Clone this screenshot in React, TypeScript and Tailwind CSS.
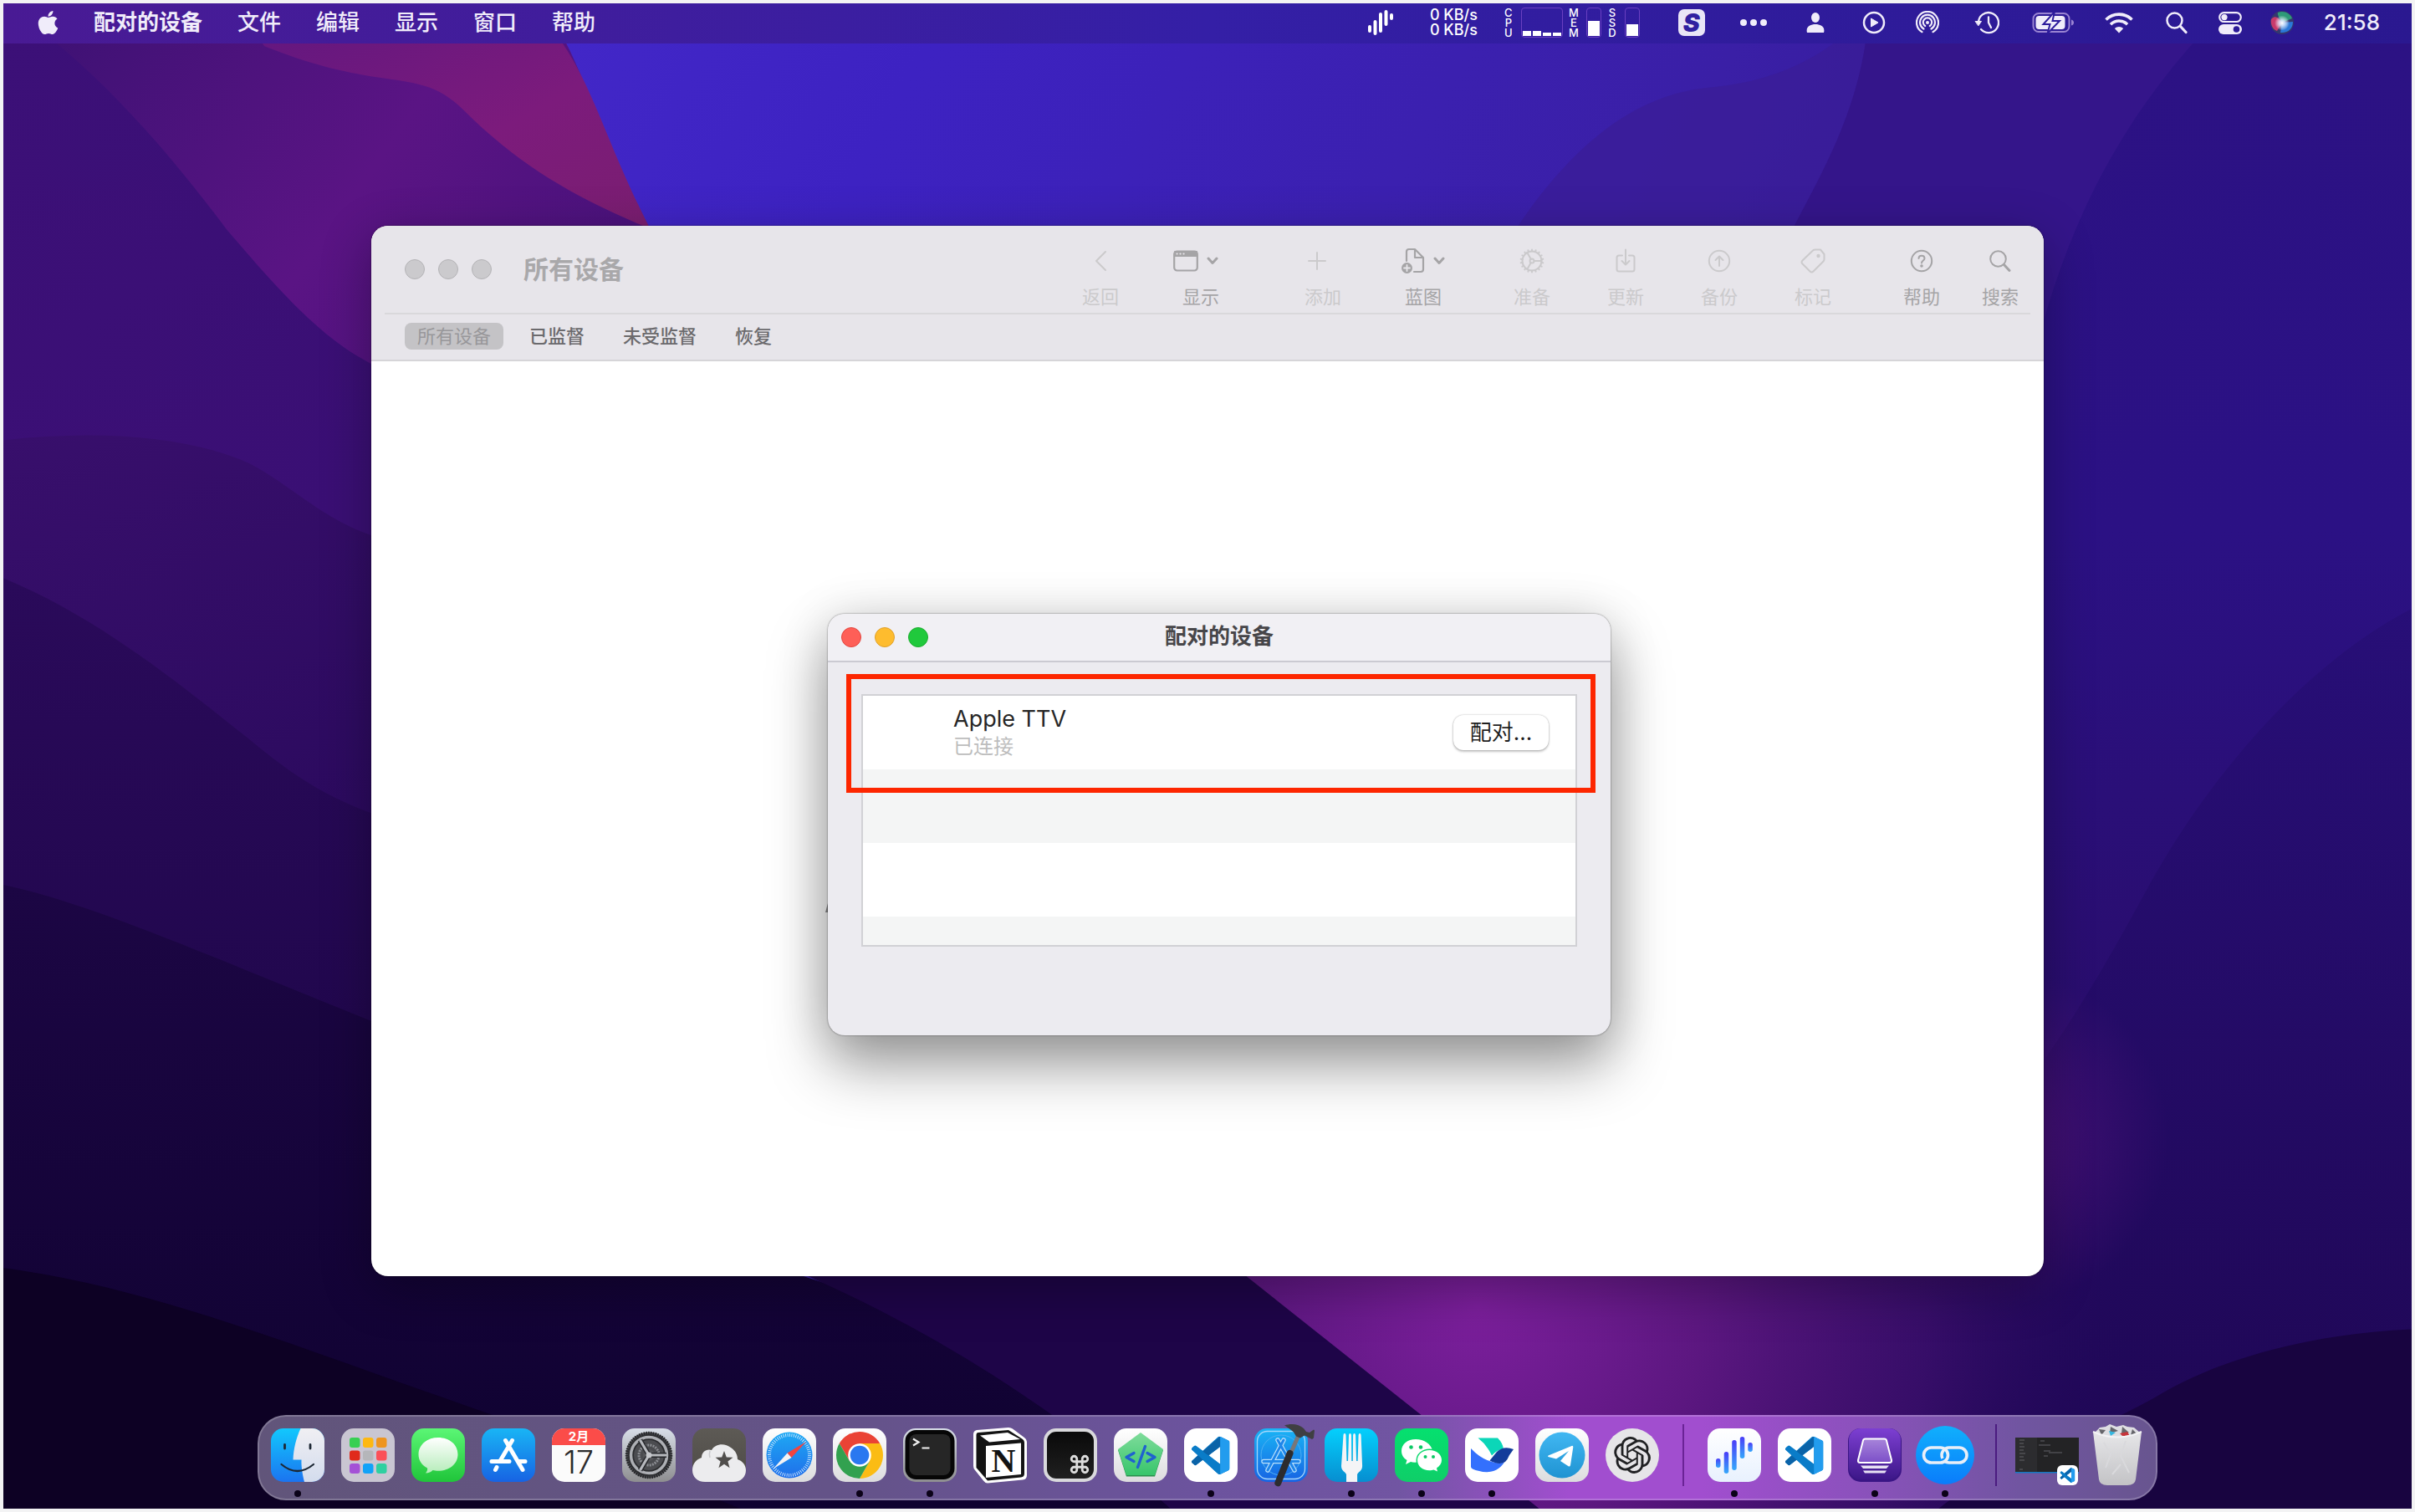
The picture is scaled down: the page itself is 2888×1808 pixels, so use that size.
import React from "react";
import { Command } from "lucide-react";
import { FaApple } from "react-icons/fa";
import { SiOpenai } from "react-icons/si";

type Kids = { children?: React.ReactNode };

/* ---------- Wallpaper ---------- */

function Wallpaper() {
  return (
    <svg className="absolute inset-0 -z-10 h-full w-full" viewBox="0 0 1568 982" preserveAspectRatio="none" aria-hidden="true">
      <defs>
        <linearGradient id="w-sky" x1="0" y1="0" x2="1" y2="0.35">
          <stop offset="0" stopColor="#4a2fd0" />
          <stop offset="0.35" stopColor="#3d22c2" />
          <stop offset="0.65" stopColor="#3a1fa6" />
          <stop offset="1" stopColor="#2a1488" />
        </linearGradient>
        <linearGradient id="w-violet" x1="0" y1="0" x2="1" y2="0.5">
          <stop offset="0" stopColor="#3a1172" />
          <stop offset="0.6" stopColor="#5a1484" />
          <stop offset="1" stopColor="#4a127c" />
        </linearGradient>
        <linearGradient id="w-magenta" x1="0" y1="0" x2="1" y2="1">
          <stop offset="0" stopColor="#5e1680" />
          <stop offset="0.6" stopColor="#7c1b7c" />
          <stop offset="1" stopColor="#7a1e70" />
        </linearGradient>
        <linearGradient id="w-left1" x1="0" y1="0" x2="0.4" y2="1">
          <stop offset="0" stopColor="#3c1078" />
          <stop offset="1" stopColor="#3a0f74" />
        </linearGradient>
        <linearGradient id="w-left2" x1="0" y1="0" x2="0.3" y2="1">
          <stop offset="0" stopColor="#380f6c" />
          <stop offset="1" stopColor="#2b0a5e" />
        </linearGradient>
        <linearGradient id="w-left3" x1="0" y1="0" x2="0" y2="1">
          <stop offset="0" stopColor="#2a0a5a" />
          <stop offset="1" stopColor="#1d0648" />
        </linearGradient>
        <linearGradient id="w-left4" x1="0" y1="0" x2="0" y2="1">
          <stop offset="0" stopColor="#1c0644" />
          <stop offset="1" stopColor="#0f0230" />
        </linearGradient>
        <linearGradient id="w-right" x1="0" y1="0" x2="0" y2="1">
          <stop offset="0" stopColor="#2c1284" />
          <stop offset="0.35" stopColor="#2b1184" />
          <stop offset="0.7" stopColor="#290d6c" />
          <stop offset="1" stopColor="#23085a" />
        </linearGradient>
        <linearGradient id="w-right2" x1="0" y1="0" x2="0" y2="1">
          <stop offset="0" stopColor="#260e74" />
          <stop offset="1" stopColor="#1c0650" />
        </linearGradient>
        <radialGradient id="w-glow" cx="960" cy="850" r="420" gradientUnits="userSpaceOnUse">
          <stop offset="0" stopColor="#7c1f9c" />
          <stop offset="0.35" stopColor="#5c1780" />
          <stop offset="0.7" stopColor="#3c0f6c" stopOpacity=".8" />
          <stop offset="1" stopColor="#23085a" stopOpacity="0" />
        </radialGradient>
        <radialGradient id="w-glow2" cx="1300" cy="740" r="110" gradientUnits="userSpaceOnUse">
          <stop offset="0" stopColor="#5a1480" stopOpacity=".7" />
          <stop offset="1" stopColor="#5a1480" stopOpacity="0" />
        </radialGradient>
      </defs>
      <rect width="1568" height="982" fill="url(#w-sky)" />
      <path d="M1110 55C1060 60 1020 95 985 147V300H1240V0H1215C1205 20 1170 50 1110 55Z" fill="#3b1c96" opacity=".7" />
      <path d="M1215 0C1212 60 1190 100 1165 147V400H1568V0Z" fill="#34158a" />
      <path d="M1450 0C1390 60 1345 130 1320 240L700 600V982H1568V0Z" fill="url(#w-right)" />
      <path d="M1568 395C1500 430 1440 500 1400 570C1370 625 1340 680 1290 740L760 800V982H1568Z" fill="url(#w-right2)" opacity=".7" />
      <path d="M0 0H350C375 30 385 80 421 147L300 300H0Z" fill="url(#w-violet)" />
      <path d="M170 28C250 60 270 40 300 70C340 110 380 130 421 147C390 85 385 55 360 20L150 0Z" fill="url(#w-magenta)" />
      <path d="M0 0C60 40 110 100 145 147C190 200 215 225 250 240V420H0Z" fill="url(#w-left1)" />
      <path d="M0 285C60 278 120 282 160 300C190 315 215 345 260 352V600H0Z" fill="url(#w-left2)" />
      <path d="M0 375C60 400 110 440 160 480C190 505 215 522 260 535V800H0Z" fill="url(#w-left3)" />
      <path d="M0 575C60 588 130 620 260 672L520 830C620 860 700 920 760 982H0Z" fill="url(#w-left4)" />
      <path d="M500 820C620 870 700 930 760 982H1100L810 820Z" fill="#1e0548" />
      <path d="M0 825C100 838 200 880 330 925C400 950 450 970 480 982H0Z" fill="#0d0124" />
      <path d="M790 815L1000 982H1568V600H1200L900 815Z" fill="url(#w-glow)" />
      <circle cx="1300" cy="740" r="110" fill="url(#w-glow2)" />
      <path d="M1568 865C1500 868 1440 885 1400 910C1350 938 1300 950 1260 982H1568Z" fill="#180440" />
    </svg>
  );
}

/* ---------- Menu bar ---------- */

const MENUS = ["文件", "编辑", "显示", "窗口", "帮助"];

function Meter({ label, levels, wide }: { label: string; levels: number[]; wide?: boolean }) {
  return (
    <div className="flex items-center gap-[10px]">
      <div className="flex w-[10px] flex-col items-center text-[13px] leading-3 font-medium">
        {label.split("").map((c, i) => (
          <span key={i}>{c}</span>
        ))}
      </div>
      <div className={`${wide ? "w-[50px]" : "w-[18px]"} flex h-9 items-end gap-[2px] rounded-[4px] border border-[#6a3fc0] px-px pb-px`}>
        {levels.map((h, i) => (
          <div key={i} className="flex-1 bg-white" style={{ height: h }} />
        ))}
      </div>
    </div>
  );
}

function StatusButton({ label, width, children }: Kids & { label: string; width: string }) {
  return (
    <button type="button" aria-label={label} className={`${width} flex h-full items-center justify-center`}>
      {children}
    </button>
  );
}

function MenuBar() {
  return (
    <header className="flex h-12 items-center justify-between bg-linear-to-r from-[#491a94] via-[#341fa6] to-[#2a1890] pb-[2px] text-[26px] leading-[46px] text-[#f0ecfa]">
      <nav className="flex items-center gap-[42px] pl-10 font-medium" aria-label="菜单">
        <button type="button" aria-label="Apple" className="-mr-[2px] w-7">
          <FaApple className="h-8 w-[27px]" />
        </button>
        <button type="button" className="font-bold">配对的设备</button>
        {MENUS.map((m) => (
          <button key={m} type="button">{m}</button>
        ))}
      </nav>
      <div className="flex h-full items-center pr-[38px]">
        <StatusButton label="音频" width="w-[30px]">
          <svg width="30" height="32" viewBox="0 0 30 32" stroke="#fff" strokeWidth="4" strokeLinecap="round">
            <path d="M2 21v5M8.500 15v14M15 6v20M21.500 3v15M28 7v4" />
          </svg>
        </StatusButton>
        <div className="ml-11 flex flex-col text-[18px] leading-[18px] font-medium text-white">
          <span>0 KB/s</span>
          <span>0 KB/s</span>
        </div>
        <div className="ml-8 flex items-center gap-2 pr-6 text-white">
          <Meter label="CPU" levels={[6, 6, 4, 4]} wide />
          <Meter label="MEM" levels={[18]} />
          <Meter label="SSD" levels={[14]} />
        </div>
        <StatusButton label="输入法" width="w-[76px]">
          <span className="flex size-8 items-center justify-center rounded-[7px] bg-[#e9e5f6] text-[30px] leading-8 font-black text-[#3020a0] italic">S</span>
        </StatusButton>
        <StatusButton label="更多" width="w-[72px]">
          <svg width="32" height="8" viewBox="0 0 32 8" fill="currentColor"><circle cx="4" cy="4" r="4" /><circle cx="16" cy="4" r="4" /><circle cx="28" cy="4" r="4" /></svg>
        </StatusButton>
        <StatusButton label="用户" width="w-[76px]">
          <svg width="22" height="24" viewBox="0 0 22 24" fill="currentColor"><ellipse cx="11" cy="6" rx="5" ry="6" /><path d="M1 24C-1 17 5 14 11 14s12 3 10 10Z" /></svg>
        </StatusButton>
        <StatusButton label="播放" width="w-16">
          <svg width="28" height="28" viewBox="0 0 28 28"><circle cx="14" cy="14" r="12" fill="none" stroke="currentColor" strokeWidth="2.500" /><path d="M10.500 9v10l8.500-5Z" fill="currentColor" stroke="currentColor" strokeLinejoin="round" /></svg>
        </StatusButton>
        <StatusButton label="隔空投送" width="w-16">
          <svg width="28" height="28" viewBox="0 0 28 28" fill="none" stroke="currentColor" strokeWidth="2.200" strokeLinecap="round">
            <path d="M7.500 25.200a13 13 0 1 1 13 0M9.500 21.500a9 9 0 1 1 9 0M11.200 18a5.200 5.200 0 1 1 5.600 0" />
            <circle cx="14" cy="14" r="2" fill="currentColor" stroke="none" />
          </svg>
        </StatusButton>
        <StatusButton label="时间机器" width="w-[78px]">
          <svg width="30" height="28" viewBox="0 0 30 28" fill="none" stroke="currentColor" strokeWidth="2.300" strokeLinecap="round" strokeLinejoin="round">
            <path d="M5 14a12 12 0 1 1 3 8M17 7.500V14l3 6" />
            <path d="M1.500 12.500h7L5 17.500Z" fill="currentColor" strokeWidth="1" />
          </svg>
        </StatusButton>
        <StatusButton label="电池" width="w-[82px]">
          <svg width="52" height="26" viewBox="0 0 52 26">
            <rect x="1.500" y="2" width="43" height="22" rx="6.500" fill="none" stroke="#9a84d2" strokeWidth="2" />
            <path d="M47 9.500c4 1 4 6 0 7Z" fill="#9a84d2" />
            <rect x="4.500" y="5" width="35" height="16" rx="4" fill="currentColor" />
            <path d="M27 0 13.500 15h8L18.500 26 33 11h-8.500Z" fill="currentColor" stroke="#2e1c9c" strokeWidth="2" />
          </svg>
        </StatusButton>
        <StatusButton label="无线局域网" width="w-[74px]">
          <svg width="34" height="26" viewBox="0 0 34 26" fill="none" stroke="currentColor" strokeWidth="3.600">
            <path d="M1.500 9.500a22 22 0 0 1 31 0M7 15.200a14 14 0 0 1 20 0" />
            <path d="M17 25.500 11.800 20a7.500 7.500 0 0 1 10.400 0Z" fill="currentColor" stroke="none" />
          </svg>
        </StatusButton>
        <StatusButton label="搜索" width="w-16">
          <svg width="26" height="28" viewBox="0 0 26 28" fill="none" stroke="currentColor" strokeLinecap="round"><circle cx="10.500" cy="11.500" r="9" strokeWidth="2.500" /><path d="m17.500 18.500 6.500 7" strokeWidth="3.200" /></svg>
        </StatusButton>
        <StatusButton label="控制中心" width="w-16">
          <svg width="28" height="28" viewBox="0 0 28 28">
            <rect x="1.200" y="2.200" width="25.600" height="10.800" rx="5.400" fill="none" stroke="currentColor" strokeWidth="2.200" />
            <circle cx="7" cy="7.600" r="3.600" fill="currentColor" />
            <rect y="16" width="28" height="12" rx="6" fill="currentColor" />
            <circle cx="21.500" cy="22" r="3.800" fill="#2c1a98" />
          </svg>
        </StatusButton>
        <StatusButton label="Siri" width="w-[60px]">
          <svg width="28" height="28" viewBox="0 0 28 28">
            <defs>
              <radialGradient id="siri-core"><stop offset="0" stopColor="#fff" /><stop offset=".35" stopColor="#d8e8ff" stopOpacity=".9" /><stop offset="1" stopColor="#fff" stopOpacity="0" /></radialGradient>
            </defs>
            <circle cx="14" cy="14" r="14" fill="#34386e" />
            <path d="M1 10C6 4 10 9 14 14L8 24C2 22 0 15 1 10Z" fill="#c83a6c" />
            <path d="M9 2c7-3 15 1 17 7l-12 5C12 9 8 6 9 2Z" fill="#2e9a78" />
            <path d="M14 14l13-1c0 8-6 14-15 13Z" fill="#2b78d8" />
            <circle cx="14" cy="14.500" r="9" fill="url(#siri-core)" />
          </svg>
        </StatusButton>
        <time className="pl-5 font-medium">21:58</time>
      </div>
    </header>
  );
}

/* ---------- Device window ---------- */

function Tool({ label, faint, children }: Kids & { label: string; faint?: boolean }) {
  return (
    <button type="button" disabled={faint} className={`${faint ? "text-[#cbcacc]" : "text-[#a5a4a6]"} flex w-[72px] flex-col items-center gap-3`}>
      <span className="flex h-8 items-center justify-center gap-[10px]">{children}</span>
      <span className="text-[22px] leading-[30px]">{label}</span>
    </button>
  );
}

const thin = { fill: "none", stroke: "currentColor", strokeWidth: 2, strokeLinecap: "round", strokeLinejoin: "round" } as const;

function Chevron() {
  return <svg width="14" height="10" viewBox="0 0 14 10" {...thin} strokeWidth={3}><path d="m2 2 5 5.500L12 2" /></svg>;
}

function GearIcon() {
  const teeth = Array.from({ length: 18 }, (_, i) => i * 20);
  return (
    <svg width="30" height="30" viewBox="0 0 30 30" {...thin}>
      <circle cx="15" cy="15" r="11.500" />
      <circle cx="15" cy="15" r="2.500" />
      <path d="M17.500 15h9M13.700 12.800 9.300 5M13.700 17.200 9.300 25" />
      {teeth.map((a) => (
        <path key={a} d="M15 3.500V1.500" transform={`rotate(${a} 15 15)`} />
      ))}
    </svg>
  );
}

const TABS = ["所有设备", "已监督", "未受监督", "恢复"];

function DeviceWindow() {
  return (
    <section aria-label="所有设备" className="relative mx-auto mt-[218px] flex h-[1256px] w-[2000px] flex-col rounded-[20px] bg-white shadow-[0_0_2px_rgba(0,0,0,0.6),0_16px_60px_rgba(0,0,0,0.3)]">
      <div className="rounded-t-[20px] border-b-2 border-[#d6d5d8] bg-[#e7e5ea]">
        <div className="mx-4 flex h-[106px] items-start justify-between border-b-2 border-[#d9d8db]">
          <div className="flex h-[104px] items-center gap-4 pl-6">
            {[0, 1, 2].map((i) => (
              <span key={i} className="size-6 rounded-full border border-[#b4b3b6] bg-[#cbcacd]" />
            ))}
            <h1 className="pl-[22px] text-[30px] font-bold text-[#a9a8aa]">所有设备</h1>
          </div>
          <div className="flex gap-[58px] pt-[26px]">
            <div className="mr-4 flex gap-12">
              <Tool label="返回" faint>
                <svg width="14" height="26" viewBox="0 0 14 26" {...thin}><path d="M13 2 2 13l11 11" /></svg>
              </Tool>
              <Tool label="显示">
                <span className="flex items-center gap-[10px] pr-3">
                  <svg width="30" height="26" viewBox="0 0 30 26" {...thin} strokeWidth={2.2}>
                    <rect x="1.200" y="1.500" width="27.600" height="23" rx="3.500" />
                    <path d="M2 2h26v5H2Z" fill="currentColor" />
                    <path d="M4.500 4.500h.1M8.500 4.500h.1M12.500 4.500h.1" stroke="#e7e5ea" />
                  </svg>
                  <Chevron />
                </span>
              </Tool>
            </div>
            <div className="flex gap-12">
              <Tool label="添加" faint>
                <svg width="36" height="24" viewBox="0 0 36 24" {...thin}><path d="M1 12h20M11 2v20" /></svg>
              </Tool>
              <Tool label="蓝图">
                <svg width="28" height="32" viewBox="0 0 28 32" {...thin} strokeWidth={2.2}>
                  <path d="M6 16V5q0-3 3-3h7l10 10v14q0 3-3 3h-8M16 2v10h10" />
                  <circle cx="6.500" cy="24.500" r="6.500" fill="currentColor" stroke="none" />
                  <path d="M6.500 21v7M3 24.500h7" stroke="#e7e5ea" strokeWidth="1.800" />
                </svg>
                <Chevron />
              </Tool>
            </div>
            <div className="flex gap-10">
              <Tool label="准备" faint><GearIcon /></Tool>
              <Tool label="更新" faint>
                <svg width="24" height="30" viewBox="0 0 24 30" {...thin}><path d="M8 8.500H4q-2.500 0-2.500 2.500v14q0 2.500 2.500 2.500h16q2.500 0 2.500-2.500V11q0-2.500-2.500-2.500h-4M12 1.500v18m-4.500-4.500 4.500 4.500 4.500-4.500" /></svg>
              </Tool>
              <Tool label="备份" faint>
                <svg width="28" height="28" viewBox="0 0 28 28" {...thin}><circle cx="14" cy="14" r="12.200" /><path d="M14 20V8.500m-4.500 4.500L14 8.500l4.500 4.500" /></svg>
              </Tool>
              <Tool label="标记" faint>
                <svg width="30" height="30" viewBox="0 0 30 30" {...thin}><path d="M15 2.500Q16 1.500 18 1.500h6L28.500 7v6q0 1.500-1 2.500L15.500 27.500q-2 2-4 0l-9-9q-2-2 0-4Z" /><circle cx="21.500" cy="9" r="1.200" fill="currentColor" /></svg>
              </Tool>
            </div>
            <div className="flex gap-[22px]">
              <Tool label="帮助">
                <svg width="28" height="28" viewBox="0 0 28 28" {...thin}><circle cx="14" cy="14" r="12.200" /><path d="M10.500 11c0-4.500 7-4.500 7 0 0 2.500-3.500 2.500-3.500 5.500" /><circle cx="14" cy="20" r=".8" fill="currentColor" /></svg>
              </Tool>
              <Tool label="搜索">
                <svg width="26" height="28" viewBox="0 0 26 28" {...thin}><circle cx="10.500" cy="11.500" r="9.300" /><path d="m17.500 18.500 6.500 7" strokeWidth="3" /></svg>
              </Tool>
            </div>
          </div>
        </div>
        <nav className="flex h-[54px] items-center gap-4 px-10 pb-[2px]" aria-label="筛选">
          {TABS.map((t, i) => (
            <button
              key={t}
              type="button"
              aria-pressed={i === 0}
              className={`${i === 0 ? "bg-[#c4c3c6] text-[#98979a]" : "font-medium text-[#6b6a6d]"} h-8 rounded-lg px-[15px] text-[22px] leading-[30px]`}
            >
              {t}
            </button>
          ))}
        </nav>
      </div>
      <svg className="absolute top-[810px] left-[543px]" width="4" height="11" viewBox="0 0 4 11" aria-hidden="true"><path d="M3 0h1v11H0Z" fill="#8a8a8c" /></svg>
      <PairDialog />
    </section>
  );
}

function PairDialog() {
  return (
    <section
      role="dialog"
      aria-label="配对的设备"
      className="absolute top-[464px] left-[546px] h-[504px] w-[936px] rounded-[20px] bg-[#ecebf0] shadow-[0_0_2px_rgba(0,0,0,0.6),0_36px_70px_rgba(0,0,0,0.38),0_4px_60px_rgba(0,0,0,0.14)]"
    >
      <div className="grid h-[58px] grid-cols-[1fr_auto_1fr] items-center rounded-t-[20px] border-b-2 border-[#cbcad2] bg-[#f1f0f4] px-4">
        <div className="flex gap-4">
          <button type="button" aria-label="关闭" className="size-6 rounded-full border border-[#e2463f] bg-[#fe5f57]" />
          <button type="button" aria-label="最小化" className="size-6 rounded-full border border-[#e0a02a] bg-[#febc2e]" />
          <button type="button" aria-label="缩放" className="size-6 rounded-full border border-[#1dad2f] bg-[#20c93c]" />
        </div>
        <h2 className="pb-1 text-[26px] font-bold text-[#474649]">配对的设备</h2>
      </div>
      <ul className="mx-10 mt-[38px] border-2 border-[#d1d1d5] bg-white">
        <li className="flex h-[88px] items-center justify-between pr-8 pl-[108px]">
          <div className="flex flex-col pt-[2px]">
            <span className="text-[27px] leading-8 text-[#262626]">Apple TTV</span>
            <span className="text-[24px] leading-[34px] text-[#bdbdbd]">已连接</span>
          </div>
          <button type="button" className="h-[42px] w-[114px] rounded-xl bg-white text-[26px] leading-[42px] text-[#1f1f1f] shadow-[0_0_2px_rgba(0,0,0,0.3),0_2px_3px_rgba(0,0,0,0.22)]">
            配对...
          </button>
        </li>
        <li className="h-[88px] bg-[#f4f5f5]" />
        <li className="h-[88px]" />
        <li className="h-[34px] bg-[#f4f5f5]" />
      </ul>
      <div className="pointer-events-none absolute top-[72px] left-[22px] h-[142px] w-[896px] border-6 border-[#fd2600]" />
    </section>
  );
}

/* ---------- Dock icons ---------- */

function Art({ children }: Kids) {
  return <svg className="size-16 overflow-visible" viewBox="0 0 64 64" aria-hidden="true">{children}</svg>;
}

function Tile({ fill }: { fill: string }) {
  return <rect width="64" height="64" rx="15" fill={fill} />;
}

function DockDefs() {
  const g = (id: string, a: string, b: string) => (
    <linearGradient id={id} x1="0" y1="0" x2="0" y2="1"><stop offset="0" stopColor={a} /><stop offset="1" stopColor={b} /></linearGradient>
  );
  return (
    <svg className="absolute size-0" aria-hidden="true">
      <defs>
        {g("d-finder", "#12c8fd", "#1b74f0")}
        {g("d-face", "#f0eff3", "#d3dced")}
        {g("d-green", "#5bf675", "#20c53a")}
        {g("d-bubble", "#ffffff", "#b5ecb9")}
        {g("d-store", "#19b5f5", "#1763e3")}
        {g("d-silver", "#d8dee8", "#8e8e90")}
        {g("d-stone", "#5d5a55", "#4d4a46")}
        {g("d-white", "#ffffff", "#dcdcde")}
        {g("d-safari", "#1ea9f4", "#1f6eea")}
        {g("d-penta", "#7fdc9b", "#37c56b")}
        {g("d-fork", "#04d0fd", "#078ed0")}
        {g("d-wechat", "#05e06f", "#0fce68")}
        {g("d-tg", "#41b7f2", "#1f93d2")}
        {g("d-wave", "#ffffff", "#e8f1fe")}
        {g("d-bars", "#4a3cf8", "#35a8fb")}
        {g("d-conf", "#7d3fd2", "#3d1789")}
        {g("d-confin", "#a784da", "#7c4fc8")}
        {g("d-link", "#10b0fd", "#0a7cfb")}
        {g("d-trash", "#e6e6e8", "#c3c3c6")}
        <clipPath id="d-tile"><rect width="64" height="64" rx="15" /></clipPath>
        <clipPath id="d-vs">
          <path d="M23.150 2.587L18.210.21a1.494 1.494 0 0 0-1.705.29l-9.460 8.630-4.120-3.128a.999.999 0 0 0-1.276.057L.327 7.261A1 1 0 0 0 .326 8.740L3.899 12 .326 15.260a1 1 0 0 0 .001 1.479L1.650 17.940a.999.999 0 0 0 1.276.057l4.120-3.128 9.460 8.630a1.492 1.492 0 0 0 1.704.290l4.942-2.377A1.500 1.500 0 0 0 24 20.060V3.939a1.500 1.500 0 0 0-.850-1.352zm-5.146 14.861L10.826 12l7.178-5.448v10.896z" clipRule="evenodd" />
        </clipPath>
      </defs>
    </svg>
  );
}

function Finder() {
  return (
    <Art>
      <g clipPath="url(#d-tile)">
        <rect width="64" height="64" fill="url(#d-finder)" />
        <path d="M35.500 0C30 12 27 25 26.500 37.500H36.500C36 46 38 56 40 64H64V0Z" fill="url(#d-face)" />
      </g>
      <path d="M16.500 19.500v4.500M47 19.500v4.500" stroke="#1d2733" strokeWidth="2.800" strokeLinecap="round" />
      <path d="M12.500 43q19 16 38.500 0" fill="none" stroke="#1d2733" strokeWidth="2.200" strokeLinecap="round" />
    </Art>
  );
}

const PAD = ["#37cf52", "#fdb813", "#ee9520", "#e02a1c", "#b5b6ba", "#fb4f58", "#a451d6", "#11a2f8", "#2fd0a0"];

function Launchpad() {
  return (
    <Art>
      <Tile fill="#c9c6d2" />
      {PAD.map((c, i) => (
        <rect key={c} x={10 + (i % 3) * 16} y={11 + Math.floor(i / 3) * 15.5} width="12.500" height="12" rx="3" fill={c} />
      ))}
    </Art>
  );
}

function Messages() {
  return (
    <Art>
      <Tile fill="url(#d-green)" />
      <path d="M32 11C18.500 11 8.500 19.500 8.500 31c0 7.500 4 13 10.500 16.500.5 2.500-.5 4-2 6 4 0 6.500-1.500 8.500-3.500 2 .5 4 .8 6.500.8C45.500 50.800 55.500 42.500 55.500 31S45.500 11 32 11Z" fill="url(#d-bubble)" />
    </Art>
  );
}

function AppStore() {
  return (
    <Art>
      <Tile fill="url(#d-store)" />
      <path d="M36.500 14.500 22 39M18 46.500 16.500 49.500M28.500 14.500l20.500 35M12 39.500h21M45 39.500h7" stroke="#fff" strokeWidth="5" strokeLinecap="round" />
    </Art>
  );
}

function CalendarIcon() {
  return (
    <span className="flex size-16 flex-col items-center overflow-hidden rounded-[15px] bg-[#fbfbfb]">
      <span className="w-full bg-[#fb4c49] text-center text-[15px] leading-5 font-bold text-white">2月</span>
      <span className="text-[38px] leading-[40px] font-light text-[#2b2b2b]">17</span>
    </span>
  );
}

function Settings() {
  return (
    <Art>
      <Tile fill="url(#d-silver)" />
      <circle cx="32" cy="32" r="27.500" fill="#4b4c50" />
      <circle cx="32" cy="32" r="26.500" fill="none" stroke="#26272a" strokeWidth="3.500" strokeDasharray="1.600 1.200" />
      <circle cx="32" cy="32" r="21.500" fill="none" stroke="#2b2c2f" strokeWidth="7" />
      <circle cx="32" cy="32" r="21.500" fill="none" stroke="#adafb4" strokeWidth="3.500" />
      <circle cx="32" cy="32" r="12" fill="none" stroke="#8b8d92" strokeWidth="3" strokeDasharray="2 1.200" />
      <circle cx="32" cy="32" r="7" fill="#55565a" />
      <path d="M32 32h21M32 32 21.500 14M32 32 21.500 50" stroke="#25262a" strokeWidth="6" />
      <path d="M32 32h21M32 32 21.500 14M32 32 21.500 50" stroke="#b7b9be" strokeWidth="3.200" />
      <circle cx="32" cy="32" r="3.500" fill="#c5c7cb" />
    </Art>
  );
}

function CloudStar() {
  return (
    <Art>
      <Tile fill="url(#d-stone)" />
      <path d="M0 50C0 42 5 37 11 35c0-7 6-11 12-9 4-8 16-9 23-3 6 4 8 9 8 14 6 2 10 7 10 13 0 8-6 14-15 14H15C6 64 0 58 0 50Z" fill="#ececee" />
      <path d="M21 27c-1 3-1 5 0 8" stroke="#c9c9cc" strokeWidth="1.500" fill="none" />
      <path d="m38 27 2.800 7.500 7.700.2-6.100 4.900 2.200 7.700L38 42.800l-6.600 4.500 2.200-7.700-6.100-4.900 7.700-.2Z" fill="#504e4c" />
    </Art>
  );
}

function Safari() {
  return (
    <Art>
      <Tile fill="url(#d-white)" />
      <circle cx="32" cy="32" r="27.500" fill="url(#d-safari)" />
      <circle cx="32" cy="32" r="24" fill="none" stroke="#dff1ff" strokeWidth="4" strokeDasharray=".8 1.700" />
      <path d="m52 16-17.500 19-5-5.500Z" fill="#f2443f" />
      <path d="m12.500 48.500 17-19 5 5.500Z" fill="#f3f3f5" />
    </Art>
  );
}

function Chrome() {
  return (
    <Art>
      <Tile fill="url(#d-white)" />
      <path d="M7.750 18a28 28 0 0 1 48.500 0H32L20 39Z" fill="#ea4335" />
      <path d="M56.250 18A28 28 0 0 1 32 60l12-21V18Z" fill="#fbbc14" />
      <path d="M7.750 18A28 28 0 0 0 32 60l12-21H20Z" fill="#32a14f" />
      <path d="M32 18h24.200L44 39Z" fill="#fbbc14" />
      <circle cx="32" cy="32" r="13.800" fill="#fff" />
      <circle cx="32" cy="32" r="11.300" fill="#2a78f0" />
    </Art>
  );
}

function Terminal() {
  return (
    <Art>
      <Tile fill="url(#d-silver)" />
      <rect x="2.500" y="2" width="59" height="59" rx="13" fill="#060606" />
      <rect x="7.500" y="7" width="49" height="49" rx="8" fill="#262626" />
      <path d="m12 12.500 6.500 4-6.500 4M22.500 23.500h9" fill="none" stroke="#f0f0f0" strokeWidth="2.200" />
    </Art>
  );
}

function Notion() {
  return (
    <Art>
      <path d="M4 2 42-1q3 0 5 1.500L61 11q3 2 3 5v40q0 5-5 5.500L17 65.500q-3 0-5-3L2 50q-2-2-2-5V7q0-4 4-5Z" fill="#fff" />
      <path d="M6 5 42 2l17 11q2 1.500 2 4v37q0 4-4 4.500L17 62.500 3.500 47V8Q3.500 5 6 5Z" fill="#131313" />
      <path d="M8 8.500 41 5l15 8-37 3.500Z" fill="#fff" />
      <path d="m15 21 42-3.500V55L15 59Z" fill="#fff" />
      <text x="36" y="52" textAnchor="middle" fontFamily="Liberation Serif, serif" fontWeight="700" fontSize="40" fill="#131313">N</text>
    </Art>
  );
}

function CommandApp() {
  return (
    <span className="flex size-16 items-end justify-end rounded-[15px] border-4 border-[#d9d9dc] bg-linear-to-b from-[#0a0a0a] to-[#202020] p-1 text-[#dcdcdc]">
      <Command className="size-[26px]" strokeWidth={2.6} />
    </span>
  );
}

function CodeApp() {
  return (
    <Art>
      <Tile fill="url(#d-white)" />
      <path d="m32 6 27 20-10 31.500H15L5 26Z" fill="#2a8f4c" />
      <path d="m32 5 27 20-10 31H15L5 25Z" fill="url(#d-penta)" />
      <path d="m24 29.500-9 5 9 5M37.500 21.500l-9 25M40 29.500l9 5-9 5" fill="none" stroke="#1f62cf" strokeWidth="3.400" strokeLinecap="round" strokeLinejoin="round" />
    </Art>
  );
}

function VsGlyph() {
  return (
    <g clipPath="url(#d-vs)">
      <rect width="24" height="24" fill="#0a7cc8" />
      <path d="M0 15.500 18 0v6.500L2.500 18.500 0 17Z" fill="#0a63a8" />
      <path d="M.3 7 2 5.800 18 17.500V24l-1.500-.5L.3 8.500Z" fill="#0a7cc8" />
      <rect x="18" width="6" height="24" fill="#229cee" />
    </g>
  );
}

function VsCode() {
  return (
    <Art>
      <Tile fill="#ffffff" />
      <g transform="translate(9 9.500) scale(1.900)"><VsGlyph /></g>
    </Art>
  );
}

function Xcode() {
  return (
    <Art>
      <Tile fill="url(#d-store)" />
      <rect x="3.500" y="3.500" width="57" height="57" rx="12" fill="none" stroke="#a7d8fb" strokeWidth="1.300" />
      <circle cx="32" cy="32" r="24" fill="none" stroke="#4fb0f2" />
      <g fill="none" stroke="#b9e0fc" strokeLinecap="round">
        <path d="M35 14 16 50M28 14l20 36M11 39.500h42" strokeWidth="5.500" />
        <path d="M35 14 16 50M28 14l20 36M11 39.500h42" strokeWidth="3" stroke="#1f86ea" />
      </g>
      <path d="M53 8 43 31" stroke="#77777a" strokeWidth="5" />
      <path d="M42.500 30 24 76" stroke="#2c2c2f" strokeWidth="8" strokeLinecap="round" strokeDasharray="38 60" />
      <path d="M36-3.500C44-6.500 54-5 59 0l3 4 4 1 5-3.500 1 1-1 9-2 1.500-5-2.500-4-2-5 3-5-2-3-5C43 1 39-1.500 36-3.500Z" fill="#3f3f42" />
    </Art>
  );
}

function Fork() {
  return (
    <Art>
      <Tile fill="url(#d-fork)" />
      <path d="M22.500 8q0-2 1.500-2t1.500 2l1 31h1.500l1-31q.2-2 1.500-2t1.500 2l.3 31h1.500l.3-31q.2-2 1.500-2t1.500 2l1 31h1.500l1-31q.2-2 1.500-2t1.500 2l1.500 37c0 6-5 7-6 10v9H26v-9c-1-3-6-4-6-10Z" fill="#f4f4f6" />
    </Art>
  );
}

function WeChat() {
  return (
    <Art>
      <Tile fill="url(#d-wechat)" />
      <path d="M25 13C15 13 8 19 8 27c0 5 2.500 8.500 6.500 11L13 43l6-3q3 1 8 .5L45 27C44 19 35 13 25 13Z" fill="#fff" />
      <ellipse cx="41.500" cy="38" rx="16" ry="13.500" fill="#08d96c" />
      <path d="M41.500 26C33 26 27 31 27 38s6 12.200 14.500 12.200c2 0 3.500-.2 5-.7l4.500 2-1-4c3.800-2.500 6-5.500 6-9.500 0-7-6-12-14.500-12Z" fill="#fff" />
      <g fill="#0ac964"><circle cx="19.500" cy="22.500" r="2.300" /><circle cx="31" cy="22.500" r="2.300" /><circle cx="36.500" cy="34" r="2" /><circle cx="46" cy="34" r="2" /></g>
    </Art>
  );
}

function Lark() {
  return (
    <Art>
      <Tile fill="#ffffff" />
      <path d="M15.500 11.500H39q6 6 7 13-8 1-14 8-6-13-16.500-21Z" fill="#0bd6b8" />
      <path d="M7 24q12 13 27 16.500 8 2 13 0C40 52 27 54 17 51Q7 49 7 46Z" fill="#3370fd" />
      <path d="M58 25Q46 20.500 38 28L29.500 38.500Q41 44.500 48 40q3-3 5-8Z" fill="#133c9a" />
    </Art>
  );
}

function Telegram() {
  return (
    <Art>
      <Tile fill="url(#d-white)" />
      <circle cx="32" cy="32" r="27.500" fill="url(#d-tg)" />
      <path d="M15.500 32.500 43.500 21q2-.6 1.800 1.500L42 44q-.6 2.500-2.800 1L30 39 40 27 25 36.500l-9.500-2.500q-1-.8 0-1.500Z" fill="#fff" />
    </Art>
  );
}

function ChatGpt() {
  return (
    <span className="flex size-16 items-center justify-center rounded-full bg-[#e6e5e8] text-[#202123]">
      <SiOpenai className="size-11" />
    </span>
  );
}

function Waves() {
  return (
    <Art>
      <Tile fill="url(#d-wave)" />
      <g fill="url(#d-bars)">
        <rect x="10" y="36" width="5.500" height="11" rx="2.700" /><rect x="19.700" y="28" width="5.500" height="26" rx="2.700" /><rect x="29.200" y="14" width="5.500" height="36" rx="2.700" /><rect x="38.800" y="10" width="5.500" height="26" rx="2.700" /><rect x="48.300" y="17" width="5.500" height="11" rx="2.700" />
      </g>
    </Art>
  );
}

function Configurator() {
  return (
    <Art>
      <Tile fill="#3a1585" />
      <rect x="1" width="62" height="61" rx="14" fill="url(#d-conf)" />
      <path d="M20.500 12.500h23q2 0 2.500 2L52 38q.5 3-2.500 3h-35q-3 0-2.500-3L18 14.500q.5-2 2.500-2Z" fill="url(#d-confin)" stroke="#fff" strokeWidth="2" />
      <path d="M15 44.500h34l-3 3.500H18ZM18 50.500h28l-2 3H20Z" fill="#e8e2f4" />
    </Art>
  );
}

function LinkApp() {
  return (
    <Art>
      <circle cx="32" cy="32" r="35" fill="url(#d-link)" />
      <g fill="none" stroke="#e9eff8" strokeWidth="3.600">
        <rect x="6.500" y="23" width="29" height="18" rx="9" />
        <path d="M29 36a9 9 0 0 1 8-13h12a9 9 0 0 1 0 18H37q-4 0-6-2.500" />
      </g>
    </Art>
  );
}

function WindowPreview() {
  return (
    <svg width="76" height="64" viewBox="0 0 76 64" className="overflow-visible" aria-hidden="true">
      <rect y="11" width="76" height="42" fill="#232325" />
      <rect y="11" width="26" height="41" fill="#2c2c2f" />
      <rect y="52" width="76" height="1.500" fill="#1279c0" />
      <path d="M5 14h6M5 18h5M5 22h6M5 26h5M5 30h7M5 34h5M5 38h6M5 49h4M30 15h5M28 20h14M34 27h8M40 29h16M34 33h5" stroke="#626268" strokeWidth="1" />
      <rect x="50" y="44" width="25" height="24" rx="6" fill="#fff" />
      <g transform="translate(53.500 47) scale(.75)"><VsGlyph /></g>
    </svg>
  );
}

function Trash() {
  return (
    <svg width="60" height="74" viewBox="0 0 60 74" aria-hidden="true">
      <path d="M4 9 9 4l7-1 5-3 8 3 8-2 5 2 8 1 7 6v8H4Z" fill="#dedee2" />
      <path d="m8 6 8 1-5 6ZM22 3l9 5-10 3ZM36 3l8 7-9 1ZM48 6l7 7h-9Z" fill="#66666b" />
      <path d="m20 8 8 2-6 4Z" fill="#35b7e0" />
      <path d="m33 11 9-2 3 5h-9Z" fill="#c6343a" />
      <path d="M1 9q29 13 58 0l-7 57q-1 7-10 7H18q-9 0-10-7Z" fill="url(#d-trash)" />
      <path d="M1 9q29 13 58 0" fill="none" stroke="#f3f3f5" strokeWidth="2" />
      <path d="m14 22 8 14-6 16M40 20l-6 18 10 20M24 60l10-12" stroke="#d9d9dc" strokeWidth="2" fill="none" />
    </svg>
  );
}

type DockApp = { name: string; icon: React.ReactNode; running?: boolean };

const APPS: DockApp[] = [
  { name: "访达", icon: <Finder />, running: true },
  { name: "启动台", icon: <Launchpad /> },
  { name: "信息", icon: <Messages /> },
  { name: "App Store", icon: <AppStore /> },
  { name: "日历", icon: <CalendarIcon /> },
  { name: "系统偏好设置", icon: <Settings /> },
  { name: "云", icon: <CloudStar /> },
  { name: "Safari", icon: <Safari /> },
  { name: "Chrome", icon: <Chrome />, running: true },
  { name: "终端", icon: <Terminal />, running: true },
  { name: "Notion", icon: <Notion /> },
  { name: "Command", icon: <CommandApp /> },
  { name: "Code", icon: <CodeApp /> },
  { name: "VS Code", icon: <VsCode />, running: true },
  { name: "Xcode", icon: <Xcode /> },
  { name: "Fork", icon: <Fork />, running: true },
  { name: "微信", icon: <WeChat />, running: true },
  { name: "飞书", icon: <Lark />, running: true },
  { name: "Telegram", icon: <Telegram /> },
  { name: "ChatGPT", icon: <ChatGpt /> },
];

const RECENT: DockApp[] = [
  { name: "音频", icon: <Waves />, running: true },
  { name: "VS Code", icon: <VsCode /> },
  { name: "Apple Configurator", icon: <Configurator />, running: true },
  { name: "链接", icon: <LinkApp />, running: true },
];

function DockGroup({ apps }: { apps: DockApp[] }) {
  return (
    <div className="flex gap-5">
      {apps.map((a) => (
        <button key={a.name} type="button" aria-label={a.name} className="relative size-16">
          {a.icon}
          {a.running && <span className="absolute top-[74px] left-7 size-2 rounded-full bg-[#0b0218]" />}
        </button>
      ))}
    </div>
  );
}

function Dock() {
  return (
    <footer className="mx-auto mt-auto mb-[10px] flex h-[102px] items-center rounded-[34px] border-2 border-white/20 bg-[linear-gradient(90deg,#61557a_0%,#645388_30%,#6c539e_50%,#7155a2_60%,#a14ecf_69%,#a14ecf_76%,#8c51bd_84%,#7055a0_93%,#68558f_100%)] pr-4 pb-[6px] pl-[14px] [background-origin:border-box]">
      <DockDefs />
      <DockGroup apps={APPS} />
      <div className="mx-[28px] h-[74px] w-[2px] bg-[#6a2396]" />
      <DockGroup apps={RECENT} />
      <div className="mr-[22px] ml-[28px] h-[74px] w-[2px] bg-[#4b1c80]" />
      <div className="flex items-center gap-4">
        <button type="button" aria-label="最小化的窗口"><WindowPreview /></button>
        <button type="button" aria-label="废纸篓"><Trash /></button>
      </div>
    </footer>
  );
}

export default function App() {
  return (
    <div className="min-h-screen bg-[#f3f3f4] p-1 font-['Inter','Noto_Sans_CJK_SC',sans-serif]">
      <div className="relative isolate flex min-h-[calc(100vh-8px)] flex-col overflow-hidden">
        <Wallpaper />
        <MenuBar />
        <DeviceWindow />
        <Dock />
      </div>
    </div>
  );
}
